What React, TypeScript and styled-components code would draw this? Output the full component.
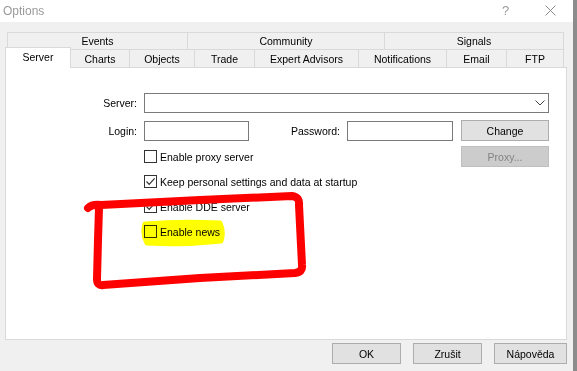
import React from "react";
import styled, { createGlobalStyle } from "styled-components";

const Global = createGlobalStyle`
  html, body { margin: 0; padding: 0; background: #ffffff; overflow: hidden; }
  * { box-sizing: border-box; }
`;

const Window = styled.div`
  width: 577px;
  height: 371px;
  background: #f0f0f0;
  font-family: "Liberation Sans", Arial, sans-serif;
  font-size: 10.5px;
  color: #000;
  display: flex;
  flex-direction: column;
  border-right: 4px solid #8c8c8c;
  overflow: hidden;
`;

const TitleBar = styled.div`
  height: 22px;
  background: #ffffff;
  display: flex;
  align-items: center;
  padding: 0 0 1px 3px;
`;

const Title = styled.span`
  font-size: 12px;
  color: #9a9a9a;
  flex: 1;
`;

const TitleButton = styled.span`
  width: 45px;
  display: flex;
  justify-content: center;
  align-items: center;
  color: #9a9a9a;
  font-size: 13px;
`;

const TabArea = styled.div`
  padding-top: 10px;
  display: flex;
  flex-direction: column;
`;

const TabRow = styled.div<{ $indent: number; $h: number }>`
  display: flex;
  margin-left: ${(p) => p.$indent}px;
  height: ${(p) => p.$h}px;
  align-items: flex-end;
`;

const Tab = styled.div<{ $w: number; $h: number; $active?: boolean }>`
  width: ${(p) => p.$w}px;
  height: ${(p) => (p.$active ? p.$h + 3 : p.$h)}px;
  margin-bottom: ${(p) => (p.$active ? -1 : 0)}px;
  margin-right: -1px;
  border: 1px solid #d9d9d9;
  border-bottom: none;
  background: ${(p) => (p.$active ? "#ffffff" : "#f0f0f0")};
  display: flex;
  align-items: center;
  justify-content: center;
  padding-bottom: ${(p) => (p.$active ? 3 : 0)}px;
  position: relative;
  z-index: ${(p) => (p.$active ? 2 : 1)};
  white-space: nowrap;
`;

const Panel = styled.div`
  margin-left: 5px;
  width: 562px;
  height: 273px;
  background: #ffffff;
  border: 1px solid #d9d9d9;
  padding: 25px 17px 0 0;
  position: relative;
  display: flex;
  flex-direction: column;
`;

const FieldRow = styled.div<{ $mt?: number }>`
  display: flex;
  align-items: center;
  margin-top: ${(p) => p.$mt ?? 0}px;
`;

const Label = styled.div<{ $w: number }>`
  width: ${(p) => p.$w}px;
  text-align: right;
  margin-right: 7px;
  flex-shrink: 0;
`;

const Select = styled.div`
  flex: 1;
  height: 20px;
  border: 1px solid #7a7a7a;
  display: flex;
  align-items: center;
  justify-content: flex-end;
  padding-right: 3px;
`;

const Input = styled.div<{ $w: number }>`
  width: ${(p) => p.$w}px;
  height: 20px;
  border: 1px solid #7a7a7a;
  flex-shrink: 0;
`;

const Button = styled.div<{ $w: number; $disabled?: boolean }>`
  width: ${(p) => p.$w}px;
  height: 21px;
  border: 1px solid ${(p) => (p.$disabled ? "#bfbfbf" : "#adadad")};
  background: ${(p) => (p.$disabled ? "#cccccc" : "#e1e1e1")};
  color: ${(p) => (p.$disabled ? "#838383" : "#000")};
  display: flex;
  align-items: center;
  justify-content: center;
  flex-shrink: 0;
`;

const RightButton = styled(Button)`
  margin-left: auto;
`;

const CheckRow = styled.div<{ $h: number; $mt?: number }>`
  display: flex;
  align-items: center;
  height: ${(p) => p.$h}px;
  margin-top: ${(p) => p.$mt ?? 0}px;
  padding-left: 138px;
`;

const Box = styled.div`
  width: 13px;
  height: 13px;
  border: 1px solid #333333;
  background: #ffffff;
  margin-right: 3px;
  display: flex;
  align-items: center;
  justify-content: center;
`;

const Footer = styled.div`
  display: flex;
  justify-content: flex-end;
  gap: 12px;
  padding: 3px 6px 0 0;
`;

const Overlay = styled.svg`
  position: absolute;
  left: -6px;
  top: -68px;
  width: 577px;
  height: 371px;
  pointer-events: none;
  z-index: 5;
`;

const Highlight = styled(Overlay)`
  mix-blend-mode: multiply;
  z-index: 4;
`;

const Check = ({ checked, label }: { checked?: boolean; label: string }) => (
  <>
    <Box>
      {checked && (
        <svg width="11" height="11" viewBox="0 0 11 11">
          <path d="M1.5 5.5 L4.2 8.3 L9.6 2.4" fill="none" stroke="#333" strokeWidth="1.2" />
        </svg>
      )}
    </Box>
    <span>{label}</span>
  </>
);

const topTabs = [
  { t: "Events", w: 181 },
  { t: "Community", w: 198 },
  { t: "Signals", w: 180 },
];

const bottomTabs = [
  { t: "Server", w: 66, active: true },
  { t: "Charts", w: 60 },
  { t: "Objects", w: 66 },
  { t: "Trade", w: 61 },
  { t: "Expert Advisors", w: 105 },
  { t: "Notifications", w: 89 },
  { t: "Email", w: 61 },
  { t: "FTP", w: 58 },
];

export default function App() {
  return (
    <>
      <Global />
      <Window>
        <TitleBar>
          <Title>Options</Title>
          <TitleButton>?</TitleButton>
          <TitleButton>
            <svg width="11" height="11" viewBox="0 0 11 11">
              <path d="M0.5 0.5 L10.5 10.5 M10.5 0.5 L0.5 10.5" stroke="#8a8a8a" strokeWidth="1" />
            </svg>
          </TitleButton>
        </TitleBar>
        <TabArea>
          <TabRow $indent={7} $h={17}>
            {topTabs.map((t) => (
              <Tab key={t.t} $w={t.w} $h={17}>
                {t.t}
              </Tab>
            ))}
          </TabRow>
          <TabRow $indent={5} $h={18}>
            {bottomTabs.map((t) => (
              <Tab key={t.t} $w={t.w} $h={18} $active={t.active}>
                {t.t}
              </Tab>
            ))}
          </TabRow>
          <Panel>
            <FieldRow>
              <Label $w={131}>Server:</Label>
              <Select>
                <svg width="10" height="6" viewBox="0 0 10 6">
                  <path d="M0.5 0.5 L5 5 L9.5 0.5" fill="none" stroke="#444" strokeWidth="1" />
                </svg>
              </Select>
            </FieldRow>
            <FieldRow $mt={7}>
              <Label $w={131}>Login:</Label>
              <Input $w={105} />
              <Label $w={91}>Password:</Label>
              <Input $w={106} />
              <RightButton $w={88}>Change</RightButton>
            </FieldRow>
            <FieldRow $mt={5}>
              <CheckRow $h={21}>
                <Check label="Enable proxy server" />
              </CheckRow>
              <RightButton $w={88} $disabled>
                Proxy...
              </RightButton>
            </FieldRow>
            <CheckRow $h={25} $mt={2}>
              <Check checked label="Keep personal settings and data at startup" />
            </CheckRow>
            <CheckRow $h={25}>
              <Check checked label="Enable DDE server" />
            </CheckRow>
            <CheckRow $h={25}>
              <Check label="Enable news" />
            </CheckRow>
            <Highlight viewBox="0 0 577 371">
              <path
                d="M145 224 Q180 221 220 223 Q224 232 221 241 Q185 245 147 243 Q142 234 145 224 Z"
                fill="#ffff00"
                stroke="#ffff00"
                strokeWidth="5"
                strokeLinejoin="round"
              />
            </Highlight>
            <Overlay viewBox="0 0 577 371">
              <path
                d="M88 208 Q92 204 101 205 L200 200 L292 196 Q300 197 299 205 L302 265 Q303 272 295 273 L200 278 L103 285 Q97 286 97 279 L98 240 L99 208"
                fill="none"
                stroke="#ff0000"
                strokeWidth="8"
                strokeLinecap="round"
                strokeLinejoin="round"
              />
            </Overlay>
          </Panel>
        </TabArea>
        <Footer>
          <Button $w={69}>OK</Button>
          <Button $w={69}>Zrušit</Button>
          <Button $w={73}>Nápověda</Button>
        </Footer>
      </Window>
    </>
  );
}
